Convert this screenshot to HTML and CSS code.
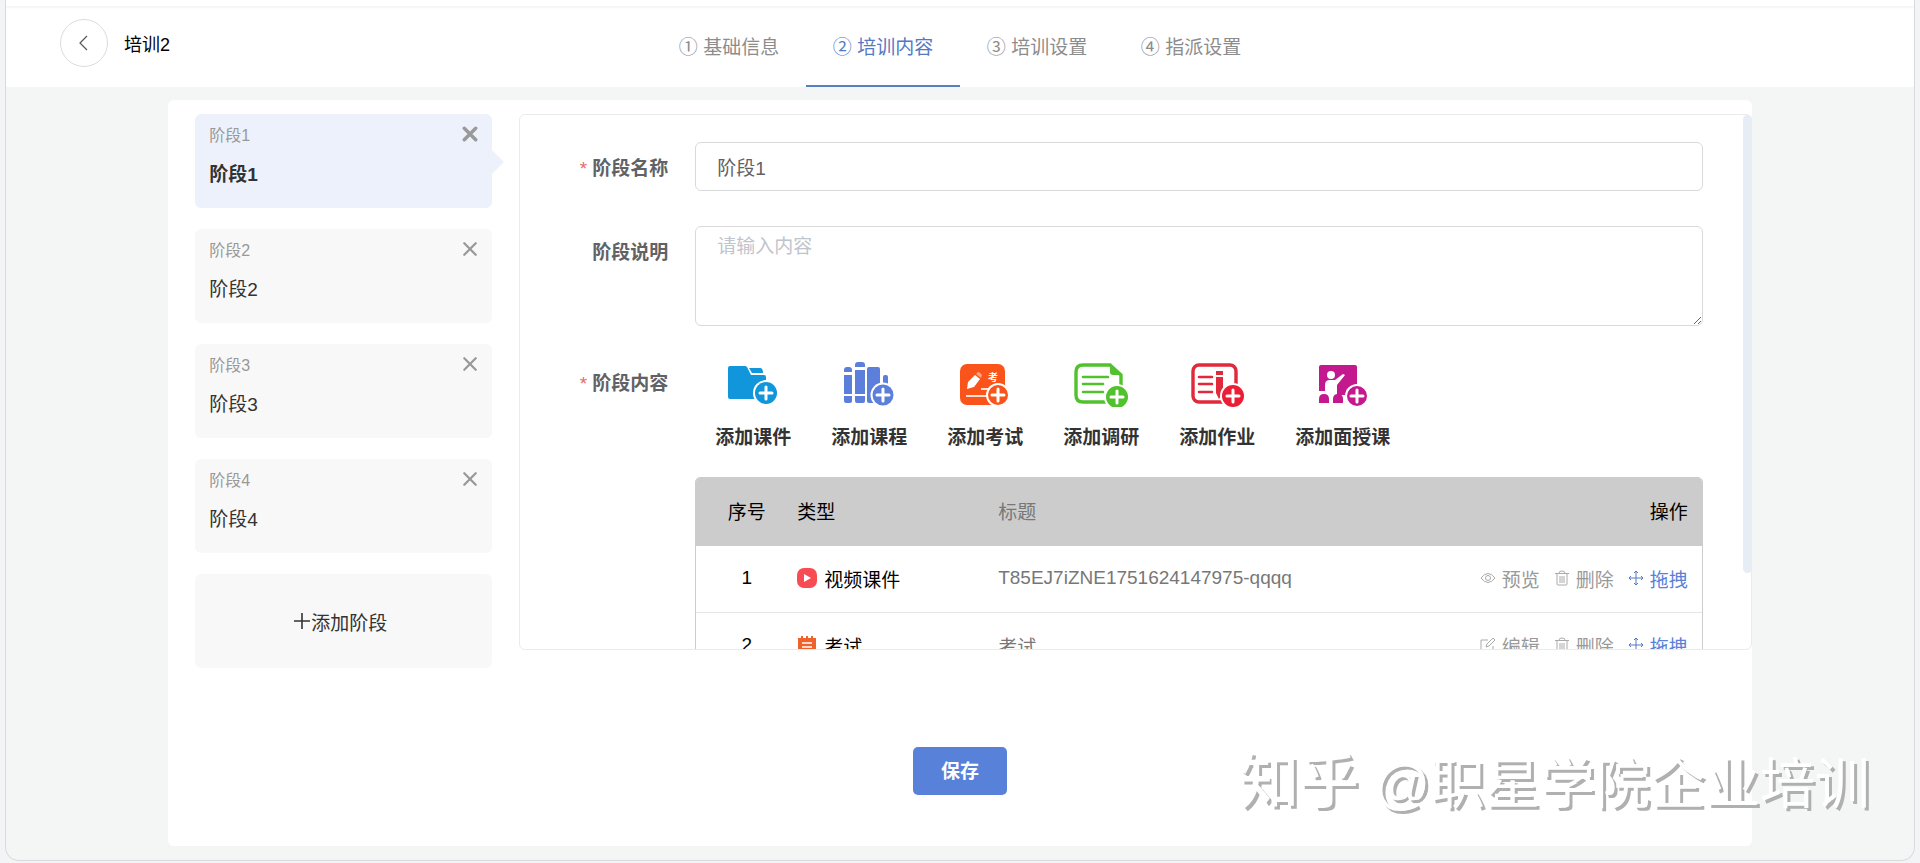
FILE: index.html
```
<!DOCTYPE html>
<html lang="zh-CN">

<head>
    <meta charset="UTF-8">
    <meta name="viewport" content="width=device-width, initial-scale=1.0">
    <title>培训2</title>
    <link rel="stylesheet" href="styles.css">
</head>

<body>
    <div class="page">
        <header class="header">
            <div class="header-left">
                <button type="button" class="back-btn" aria-label="返回">
                    <svg width="12" height="18" viewBox="0 0 12 18" fill="none" stroke="#555" stroke-width="1.2">
                        <path d="M9 2 L2 9 L9 16" />
                    </svg>
                </button>
                <h1>培训2</h1>
            </div>
            <nav class="tabs">
                <a href="#base">① 基础信息</a>
                <a href="#content" class="active">② 培训内容</a>
                <a href="#setting">③ 培训设置</a>
                <a href="#assign">④ 指派设置</a>
            </nav>
        </header>

        <main class="card">
            <div class="columns">
                <div class="stages">
                    <div class="stage active">
                        <div class="stage-top">
                            <span>阶段1</span>
                            <button type="button" class="close" aria-label="删除阶段1"><svg viewBox="0 0 14 14"><path d="M2 2 L12 12 M12 2 L2 12" /></svg></button>
                        </div>
                        <div class="stage-name">阶段1</div>
                    </div>
                    <div class="stage">
                        <div class="stage-top">
                            <span>阶段2</span>
                            <button type="button" class="close" aria-label="删除阶段2"><svg viewBox="0 0 14 14"><path d="M2 2 L12 12 M12 2 L2 12" /></svg></button>
                        </div>
                        <div class="stage-name">阶段2</div>
                    </div>
                    <div class="stage">
                        <div class="stage-top">
                            <span>阶段3</span>
                            <button type="button" class="close" aria-label="删除阶段3"><svg viewBox="0 0 14 14"><path d="M2 2 L12 12 M12 2 L2 12" /></svg></button>
                        </div>
                        <div class="stage-name">阶段3</div>
                    </div>
                    <div class="stage">
                        <div class="stage-top">
                            <span>阶段4</span>
                            <button type="button" class="close" aria-label="删除阶段4"><svg viewBox="0 0 14 14"><path d="M2 2 L12 12 M12 2 L2 12" /></svg></button>
                        </div>
                        <div class="stage-name">阶段4</div>
                    </div>
                    <button type="button" class="add-stage">
                        <svg width="16" height="16" viewBox="0 0 16 16" stroke="#333" stroke-width="1.6"><path d="M8 0 V16 M0 8 H16" /></svg>添加阶段
                    </button>
                </div>

                <div class="panel-wrap">
                    <form class="panel">
                        <div class="form-row">
                            <label for="stageName" class="required">阶段名称</label>
                            <input type="text" id="stageName" name="stageName" value="阶段1">
                        </div>
                        <div class="form-row">
                            <label for="stageDesc">阶段说明</label>
                            <textarea id="stageDesc" name="stageDesc" placeholder="请输入内容"></textarea>
                        </div>
                        <div class="form-row">
                            <span class="row-label required">阶段内容</span>
                            <div class="form-content">
                                <div class="add-list">
                                    <button type="button" class="add-item">
                                        <svg viewBox="0 0 60 50" fill="#1296db">
                                            <path d="M7 9 H22 Q23 9 24 10 L28 18 H41 Q43 18 43 20 V42 H7 Q5 42 5 40 V11 Q5 9 7 9 Z" />
                                            <path d="M26 11 H37 Q40 11 40 16 H29 Z" />
                                            <circle cx="43" cy="36" r="13" fill="#fff" />
                                            <circle cx="43" cy="36" r="11" />
                                            <path d="M43 30 V42 M37 36 H49" stroke="#fff" stroke-width="3" stroke-linecap="round" />
                                        </svg>
                                        添加课件
                                    </button>
                                    <button type="button" class="add-item">
                                        <svg viewBox="0 0 60 50" fill="#5b7fdb">
                                            <path d="M5 15 V13 Q5 10 8 10 H10 Q13 10 13 13 V15 Z M5 18 H13 V37 H5 Z M5 39 H13 V44 Q13 46 11 46 H7 Q5 46 5 44 Z" />
                                            <path d="M16 10 V8 Q16 5 19 5 H23 Q26 5 26 8 V10 Z M16 13 H26 V37 H16 Z M16 39 H26 V44 Q26 46 24 46 H18 Q16 46 16 44 Z" />
                                            <rect x="28" y="10" width="13" height="36" rx="2" />
                                            <rect x="44" y="18" width="5" height="12" rx="2" />
                                            <circle cx="44" cy="38" r="12.5" fill="#fff" />
                                            <circle cx="44" cy="38" r="10.5" />
                                            <path d="M44 32 V44 M38 38 H50" stroke="#fff" stroke-width="3" stroke-linecap="round" />
                                        </svg>
                                        添加课程
                                    </button>
                                    <button type="button" class="add-item">
                                        <svg viewBox="0 0 60 50" fill="#fb541b">
                                            <rect x="5" y="7" width="45" height="41" rx="7" />
                                            <path d="M12 32 L13 25 L20 18 L25 22 L19 30 Z" fill="#fff" />
                                            <path d="M21 17 L23 15 Q25 15 27 18 L26 21 Z" fill="#ffa27f" />
                                            <path d="M11 39 H32 M26 32 H38" stroke="#ffe0d4" stroke-width="2" />
                                            <text x="33" y="24" font-size="10" font-weight="700" fill="#fff">考</text>
                                            <circle cx="43" cy="38" r="12" fill="#fff" />
                                            <circle cx="43" cy="38" r="10" />
                                            <path d="M43 32 V44 M37 38 H49" stroke="#fff" stroke-width="3" stroke-linecap="round" />
                                        </svg>
                                        添加考试
                                    </button>
                                    <button type="button" class="add-item">
                                        <svg viewBox="0 0 60 50" fill="#51c22d">
                                            <path d="M50 30 V18 L39 8 H12 Q5 8 5 15 V38 Q5 45 12 45 H36" fill="none" stroke="#51c22d" stroke-width="3.4" />
                                            <path d="M39 7 L51 18 H42 Q39 18 39 15 Z" />
                                            <path d="M12 20 H37 M12 27 H32 M12 35 H32" stroke="#51c22d" stroke-width="2.6" stroke-linecap="round" />
                                            <circle cx="46" cy="40" r="13" fill="#fff" />
                                            <circle cx="46" cy="40" r="11" />
                                            <path d="M46 34 V46 M40 40 H52" stroke="#fff" stroke-width="3" stroke-linecap="round" />
                                        </svg>
                                        添加调研
                                    </button>
                                    <button type="button" class="add-item">
                                        <svg viewBox="0 0 60 50" fill="#e0293a">
                                            <rect x="6" y="8" width="43" height="37" rx="6" fill="none" stroke="#e0293a" stroke-width="3.4" />
                                            <path d="M12 20 H25 M12 27 H25 M12 35 H25" stroke="#e0293a" stroke-width="2.6" stroke-linecap="round" />
                                            <path d="M29 14 H36 V18 H29 Z M29 20 H36 V36 L32 42 L29 36 Z" />
                                            <circle cx="46" cy="39" r="13" fill="#fff" />
                                            <circle cx="46" cy="39" r="11" fill="#ea1f36" />
                                            <path d="M46 33 V45 M40 39 H52" stroke="#fff" stroke-width="3" stroke-linecap="round" />
                                        </svg>
                                        添加作业
                                    </button>
                                    <button type="button" class="add-item">
                                        <svg viewBox="0 0 60 50" fill="#c4188f">
                                            <path d="M8 8 H42 Q44 8 44 10 V38 H6 V10 Q6 8 8 8 Z" />
                                            <circle cx="18" cy="18" r="4" fill="#fff" />
                                            <path d="M12 38 V28 Q12 23 17 23 H22 L30 17 L32 18 L24 28 V38 Z" fill="#fff" />
                                            <path d="M6 34 H12 V38 H31 V46 H6 Z" fill="#fff" />
                                            <path d="M6 46 V42 Q6 37 11 37 Q16 37 16 42 V46 Z M20 46 V42 Q20 37 25 37 Q30 37 30 42 V46 Z" />
                                            <circle cx="44" cy="39" r="12" fill="#fff" />
                                            <circle cx="44" cy="39" r="10" />
                                            <path d="M44 33 V45 M38 39 H50" stroke="#fff" stroke-width="3" stroke-linecap="round" />
                                        </svg>
                                        添加面授课
                                    </button>
                                </div>

                                <table class="content-table">
                                    <thead>
                                        <tr>
                                            <th class="col-no">序号</th>
                                            <th class="col-type">类型</th>
                                            <th class="col-title">标题</th>
                                            <th class="col-ops">操作</th>
                                        </tr>
                                    </thead>
                                    <tbody>
                                        <tr>
                                            <td class="col-no">1</td>
                                            <td class="col-type">
                                                <div class="type">
                                                    <svg width="20" height="20" viewBox="0 0 20 20"><rect width="20" height="20" rx="7" fill="#f84c55" /><path d="M7 6 L14 10 L7 14 Z" fill="#fff" /></svg>
                                                    视频课件
                                                </div>
                                            </td>
                                            <td class="col-title">T85EJ7iZNE1751624147975-qqqq</td>
                                            <td class="col-ops">
                                                <div class="ops">
                                                    <button type="button" class="op">
                                                        <svg width="16" height="16" viewBox="0 0 16 16"><path d="M1 8 Q8 -1 15 8 Q8 17 1 8 Z" /><circle cx="8" cy="8" r="2.5" /></svg>
                                                        预览
                                                    </button>
                                                    <button type="button" class="op">
                                                        <svg width="16" height="16" viewBox="0 0 16 16"><path d="M1 3.5 H15 M5 3 Q5 1 8 1 Q11 1 11 3 M3 4 V14 Q3 15 4 15 H12 Q13 15 13 14 V4 M6 6 V13 M8 6 V13 M10 6 V13" /></svg>
                                                        删除
                                                    </button>
                                                    <button type="button" class="op drag">
                                                        <svg width="16" height="16" viewBox="0 0 16 16"><path d="M8 1 V15 M1 8 H15 M6 3 L8 1 L10 3 M6 13 L8 15 L10 13 M3 6 L1 8 L3 10 M13 6 L15 8 L13 10" /></svg>
                                                        拖拽
                                                    </button>
                                                </div>
                                            </td>
                                        </tr>
                                        <tr>
                                            <td class="col-no">2</td>
                                            <td class="col-type">
                                                <div class="type">
                                                    <svg width="20" height="20" viewBox="0 0 20 20"><path d="M1 3 H4 V1 H6 V3 H9 V1 H11 V3 H14 V1 H16 V3 H19 V14 L14 19 H1 Z" fill="#f0622c" /><path d="M5 8 H15 M5 12 H15" stroke="#fff" stroke-width="1.6" /></svg>
                                                    考试
                                                </div>
                                            </td>
                                            <td class="col-title">考试</td>
                                            <td class="col-ops">
                                                <div class="ops">
                                                    <button type="button" class="op">
                                                        <svg width="16" height="16" viewBox="0 0 16 16"><path d="M8 3 H1 V15 H13 V9 M6 10 L7 7 L13 1 L15 3 L9 9 Z" /></svg>
                                                        编辑
                                                    </button>
                                                    <button type="button" class="op">
                                                        <svg width="16" height="16" viewBox="0 0 16 16"><path d="M1 3.5 H15 M5 3 Q5 1 8 1 Q11 1 11 3 M3 4 V14 Q3 15 4 15 H12 Q13 15 13 14 V4 M6 6 V13 M8 6 V13 M10 6 V13" /></svg>
                                                        删除
                                                    </button>
                                                    <button type="button" class="op drag">
                                                        <svg width="16" height="16" viewBox="0 0 16 16"><path d="M8 1 V15 M1 8 H15 M6 3 L8 1 L10 3 M6 13 L8 15 L10 13 M3 6 L1 8 L3 10 M13 6 L15 8 L13 10" /></svg>
                                                        拖拽
                                                    </button>
                                                </div>
                                            </td>
                                        </tr>
                                    </tbody>
                                </table>
                            </div>
                        </div>
                    </form>
                    <div class="scroll-thumb"></div>
                </div>
            </div>

            <div class="actions">
                <button type="button" class="save-btn">保存</button>
            </div>
        </main>
    </div>

    <div class="watermark"><span class="watermark-logo">知乎</span> @职星学院企业培训</div>
</body>

</html>
```
FILE: styles.css
```
* {
    box-sizing: border-box;
}

body {
    margin: 0;
    min-height: 100vh;
    display: flex;
    flex-direction: column;
    background-color: #f3f4f5;
    font-family: "Liberation Sans", "Noto Sans CJK SC", sans-serif;
    font-size: 19px;
    color: #333;
}

button,
input,
textarea {
    font-family: inherit;
    font-size: 19px;
}

button {
    padding: 0;
    border: none;
    background: none;
    color: inherit;
    cursor: pointer;
}

.page {
    flex: 1;
    display: flex;
    flex-direction: column;
    margin: 0 5px 2px;
    border: 1px solid #d9dadb;
    border-top: none;
    border-radius: 0 0 14px 14px;
    background-color: #f4f6f6;
    overflow: hidden;
}

/* header */
.header {
    display: grid;
    grid-template-columns: 1fr auto 1fr;
    height: 87px;
    border-top: 6px solid #fff;
    background-color: #fff;
    box-shadow: inset 0 2px 2px #f5f5f5;
}

.header-left {
    display: flex;
    align-items: center;
    gap: 16px;
    padding: 0 0 8px 54px;
}

.header h1 {
    margin: 0;
    font-size: 18px;
    font-weight: 400;
    color: #000;
}

.back-btn {
    display: flex;
    align-items: center;
    justify-content: center;
    width: 48px;
    height: 48px;
    border: 1px solid #dcdcdc;
    border-radius: 50%;
}

.tabs {
    display: flex;
}

.tabs a {
    width: 154px;
    padding-top: 28px;
    line-height: 28px;
    border-bottom: 2px solid transparent;
    text-align: center;
    text-decoration: none;
    color: #8c8c8c;
}

.tabs a.active {
    color: #5478c4;
    border-bottom-color: #5880be;
}

/* card */
.card {
    flex: 1;
    width: 83%;
    margin: 13px auto 14px;
    padding: 14px 0 50px 27px;
    border-radius: 6px;
    background-color: #fff;
}

.columns {
    display: flex;
    gap: 27px;
}

.stages {
    flex: 0 0 297px;
    display: flex;
    flex-direction: column;
    gap: 21px;
}

.stage {
    position: relative;
    height: 94px;
    padding: 8px 14px;
    border-radius: 6px;
    background-color: #f8f8f8;
}

.stage-top {
    display: flex;
    align-items: center;
    justify-content: space-between;
    height: 24px;
    font-size: 16px;
    color: #999;
}

.close {
    display: flex;
    width: 16px;
    height: 16px;
}

.close svg {
    width: 16px;
    height: 16px;
    stroke: #999;
    stroke-width: 2;
    stroke-linecap: round;
}

.stage-name {
    margin-top: 15px;
    line-height: 28px;
}

.stage.active {
    background-color: #ecf1fb;
}

.stage.active .stage-name {
    font-weight: 700;
}

.stage.active .close svg {
    stroke-width: 3;
}

.stage.active::after {
    content: "";
    position: absolute;
    left: 100%;
    top: 36px;
    border: 12px solid transparent;
    border-left-color: #ecf1fb;
    border-right: none;
}

.add-stage {
    display: flex;
    align-items: center;
    justify-content: center;
    gap: 1px;
    height: 94px;
    padding-right: 6px;
    border-radius: 6px;
    background-color: #f8f8f8;
}

/* right panel */
.panel-wrap {
    position: relative;
    flex: 1;
    min-width: 0;
}

.panel {
    display: flex;
    flex-direction: column;
    gap: 31px;
    height: calc(100vh - 327px);
    padding: 27px 48px 0 0;
    border: 1px solid #ebebeb;
    border-radius: 6px;
    overflow: hidden;
}

.scroll-thumb {
    position: absolute;
    top: 1px;
    right: 0;
    width: 9px;
    height: 458px;
    border-radius: 5px;
    background-color: #e6edf5;
}

.form-row {
    display: flex;
    gap: 27px;
}

.form-row label,
.row-label {
    flex: 0 0 148px;
    line-height: 53px;
    text-align: right;
    font-weight: 700;
    color: #606266;
}

.required::before {
    content: "*";
    margin-right: 5px;
    font-weight: 400;
    color: #e56a6a;
}

.form-row input,
.form-row textarea {
    flex: 1;
    min-width: 0;
    padding: 0 21px;
    border: 1px solid #d9d9d9;
    border-radius: 6px;
    color: #606266;
    background-color: #fff;
}

.form-row input {
    height: 49px;
}

.form-row textarea {
    height: 100px;
    padding-top: 6px;
    line-height: 28px;
}

.form-row textarea::placeholder {
    color: #c0c4cc;
}

.form-content {
    flex: 1;
    min-width: 0;
}

.add-list {
    display: flex;
    gap: 40px;
    padding-left: 20px;
    margin-bottom: 25px;
}

.add-item {
    display: flex;
    flex-direction: column;
    align-items: center;
    gap: 17px;
    line-height: 28px;
    font-weight: 700;
}

.add-item svg {
    width: 60px;
    height: 50px;
}

/* table */
.content-table {
    width: 100%;
    border: 1px solid #ccc;
    border-radius: 5px;
    border-spacing: 0;
    table-layout: fixed;
    overflow: hidden;
}

.content-table th {
    height: 68px;
    padding: 0 0 4px;
    font-weight: 400;
    text-align: left;
    background-color: #ccc;
    color: #000;
}

.content-table td {
    height: 67px;
    padding: 0 0 2px;
    border-bottom: 1px solid #e6e6e6;
    color: #000;
}

.content-table .col-no {
    width: 101px;
    text-align: center;
}

.content-table .col-type {
    width: 201px;
}

.content-table .col-title {
    color: #777;
}

.content-table .col-ops {
    width: 260px;
    padding-right: 14px;
    text-align: right;
}

.type {
    display: flex;
    align-items: center;
    gap: 7px;
}

.ops {
    display: flex;
    justify-content: flex-end;
    gap: 14px;
}

.op {
    display: flex;
    align-items: center;
    gap: 6px;
    color: #999;
}

.op svg {
    fill: none;
    stroke: #aaa;
}

.op.drag {
    color: #5881d9;
}

.op.drag svg {
    stroke: #5478c4;
}

/* footer */
.actions {
    display: flex;
    justify-content: center;
    margin-top: 79px;
    padding-right: 27px;
}

.save-btn {
    width: 94px;
    height: 48px;
    padding-bottom: 4px;
    border-radius: 5px;
    background-color: #5881d9;
    color: #fff;
    font-weight: 700;
}

.watermark {
    position: fixed;
    right: 50px;
    bottom: 39px;
    line-height: 80px;
    font-size: 55px;
    white-space: nowrap;
    color: #fff;
    text-shadow: 3px 3px 0 #b0b0b0;
    pointer-events: none;
}

.watermark-logo {
    font-size: 60px;
    font-weight: 500;
}
```
